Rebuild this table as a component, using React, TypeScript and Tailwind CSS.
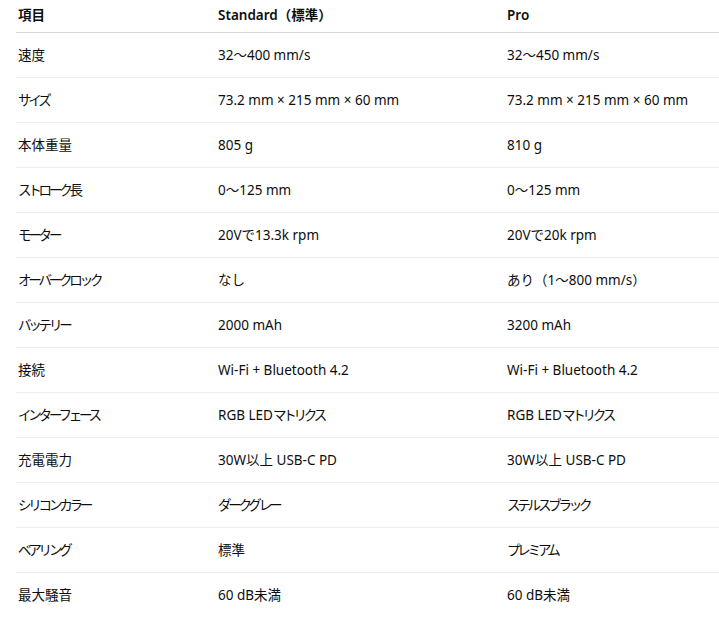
import React from "react";

const rows: [string, string, string][] = [
  ["速度", "32〜400 mm/s", "32〜450 mm/s"],
  ["サイズ", "73.2 mm × 215 mm × 60 mm", "73.2 mm × 215 mm × 60 mm"],
  ["本体重量", "805 g", "810 g"],
  ["ストローク長", "0〜125 mm", "0〜125 mm"],
  ["モーター", "20Vで13.3k rpm", "20Vで20k rpm"],
  ["オーバークロック", "なし", "あり（1〜800 mm/s）"],
  ["バッテリー", "2000 mAh", "3200 mAh"],
  ["接続", "Wi-Fi + Bluetooth 4.2", "Wi-Fi + Bluetooth 4.2"],
  ["インターフェース", "RGB LEDマトリクス", "RGB LEDマトリクス"],
  ["充電電力", "30W以上 USB-C PD", "30W以上 USB-C PD"],
  ["シリコンカラー", "ダークグレー", "ステルスブラック"],
  ["ベアリング", "標準", "プレミアム"],
  ["最大騒音", "60 dB未満", "60 dB未満"],
];

function Txt({ s }: { s: string }) {
  const parts = s.split(/([\u30a0-\u30ff]+)/).filter((p) => p.length > 0);
  return (
    <>
      {parts.map((p, i) =>
        /^[\u30a0-\u30ff]+$/.test(p) ? (
          <span key={i} className="tracking-[-3.2px]">
            {p}
          </span>
        ) : (
          <span key={i}>{p}</span>
        )
      )}
    </>
  );
}

export default function App() {
  return (
    <div
      className="w-[719px] h-[624px] bg-white overflow-hidden pl-4 text-[#0d0d0d] text-[13.5px]"
      style={{ fontFamily: '"Noto Sans", "Noto Sans CJK JP", sans-serif' }}
    >
      <div className="w-[720px]">
        <div className="grid grid-cols-[200px_289px_1fr] h-[33px] pb-px items-center border-b border-[#d6d6d6] font-semibold">
          <div className="pl-[2px]">項目</div>
          <div className="pl-[2px]">Standard（標準）</div>
          <div className="pl-[2px]">Pro</div>
        </div>
        {rows.map((r, i) => (
          <div
            key={i}
            className={`grid grid-cols-[200px_289px_1fr] h-[45px] items-center ${
              i < rows.length - 1 ? "border-b border-[#ececec]" : ""
            }`}
          >
            <div className="pl-[2px]">
              <Txt s={r[0]} />
            </div>
            <div className="pl-[2px]">
              <Txt s={r[1]} />
            </div>
            <div className="pl-[2px]">
              <Txt s={r[2]} />
            </div>
          </div>
        ))}
      </div>
    </div>
  );
}
